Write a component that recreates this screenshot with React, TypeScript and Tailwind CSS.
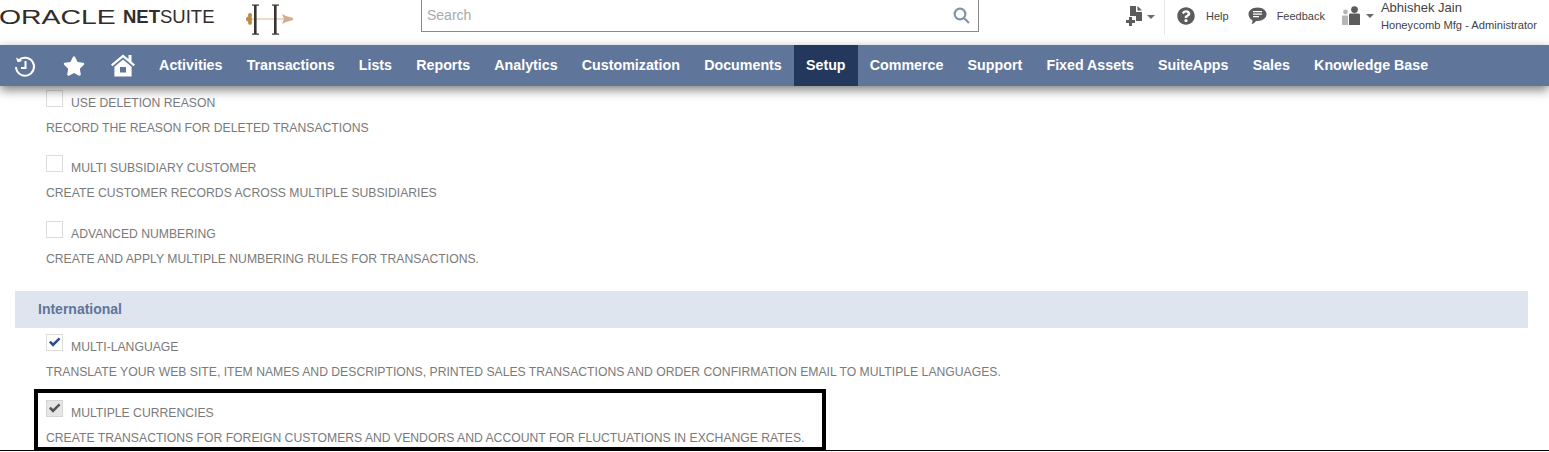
import { FaQuestionCircle, FaStar } from "react-icons/fa"

const navItems = [
  "Activities",
  "Transactions",
  "Lists",
  "Reports",
  "Analytics",
  "Customization",
  "Documents",
  "Setup",
  "Commerce",
  "Support",
  "Fixed Assets",
  "SuiteApps",
  "Sales",
  "Knowledge Base",
]

function Caret() {
  return <span className="block h-0 w-0 border-x-[4px] border-t-[4px] border-x-transparent border-t-[#6b6b6b]" />
}

function HistoryIcon() {
  return (
    <svg width="24" height="24" viewBox="0 0 24 24" fill="none" stroke="white" strokeWidth="2">
      <path d="M5.5 6.5 A9 9 0 1 1 3 13" />
      <path d="M3 3.5 L4.6 8.2 L9.4 7" fill="white" stroke="none" />
      <path d="M12.5 7 V14 H8" />
    </svg>
  )
}

function HomeIcon() {
  return (
    <svg width="24" height="23" viewBox="0 0 24 23" fill="white">
      <path d="M12 0.5 L17.5 5 V1 H20.5 V7.6 L24 10.6 L22.6 12.3 L12 3.4 L1.4 12.3 L0 10.6 Z" />
      <path d="M12 5.6 L20.6 12.8 V22.5 H3.4 V12.8 Z M9 13 V18.5 H15 V13 Z" fillRule="evenodd" />
    </svg>
  )
}

function NewRecordIcon() {
  return (
    <svg width="19" height="21" viewBox="0 0 19 21" fill="#5c5c5c">
      <path d="M4 0 H10 V6 H16 V15 H10 V10 H4 Z" />
      <path d="M11.5 0 L16 4.6 H11.5 Z" />
      <path d="M3 11 H6 V14 H9 V17 H6 V20 H3 V17 H0 V14 H3 Z" />
    </svg>
  )
}

function FeedbackIcon() {
  return (
    <svg width="19" height="18" viewBox="0 0 19 18">
      <path d="M9.5 0.5 C14.7 0.5 18.5 3.4 18.5 7.2 C18.5 11 14.7 13.9 9.5 13.9 L8 13.9 C7 15.3 5.4 16.6 3.6 17 C4.3 15.9 4.6 14.6 4.5 13.2 C2 12 0.5 9.8 0.5 7.2 C0.5 3.4 4.3 0.5 9.5 0.5 Z" fill="#5c5c5c" />
      <path d="M5 4.7 H14 M5 7.2 H14 M5 9.7 H11" stroke="white" strokeWidth="1.2" />
    </svg>
  )
}

function RolesIcon() {
  return (
    <svg width="21" height="20" viewBox="0 0 21 20">
      <circle cx="3.5" cy="6" r="2.4" fill="#b5b5b5" />
      <path d="M0 9.5 H6 V19 H0 Z" fill="#b5b5b5" />
      <circle cx="12.5" cy="3.6" r="3.4" fill="#5c5c5c" />
      <path d="M7 9 Q7 7.6 8.6 7.6 H16.4 Q18 7.6 18 9 V19 H7 Z" fill="#5c5c5c" />
    </svg>
  )
}

function LogoMark() {
  return (
    <svg width="48" height="32" viewBox="0 0 48 32">
      <path d="M5 16 H40" stroke="#dcb594" strokeWidth="1.2" />
      <ellipse cx="4" cy="12.5" rx="2" ry="2.4" fill="#c08a45" />
      <ellipse cx="4" cy="19.5" rx="2" ry="2.4" fill="#c08a45" />
      <ellipse cx="3" cy="16" rx="3" ry="2.6" fill="#c08a45" />
      <rect x="8" y="2" width="2.6" height="29" fill="#3a3330" />
      <rect x="28" y="2" width="2.6" height="29" fill="#3a3330" />
      <rect x="6" y="1.5" width="7" height="1.2" fill="#3a3330" />
      <rect x="6" y="30.5" width="7" height="1.2" fill="#3a3330" />
      <rect x="26" y="1.5" width="7" height="1.2" fill="#3a3330" />
      <rect x="26" y="30.5" width="7" height="1.2" fill="#3a3330" />
      <path d="M36 11 L40 13 L47 15 L47 17 L40 19 L36 21 L38 16 Z" fill="#d3ab90" />
    </svg>
  )
}

function Checkbox({ state }: { state: "off" | "on" | "locked" }) {
  const box =
    state === "locked" ? "border-[#d4d4d4] bg-[#e6e6e6]" : "border-[#dcdcdc] bg-white"
  const tick = state === "locked" ? "#555555" : "#2f4a8f"
  return (
    <span className={`flex h-[17px] w-[17px] shrink-0 items-center justify-center border ${box}`}>
      {state !== "off" && (
        <svg width="13" height="11" viewBox="0 0 13 11">
          <path d="M1 5.5 L2.8 3.8 L5 6 L10.8 0.6 L12.4 2.2 L5 9.8 Z" fill={tick} />
        </svg>
      )}
    </span>
  )
}

function Feature({
  label,
  text,
  state = "off",
  className = "",
}: {
  label: string
  text: string
  state?: "off" | "on" | "locked"
  className?: string
}) {
  return (
    <div className={`pl-[46px] ${className}`}>
      <div className="flex h-[17px] gap-2">
        <Checkbox state={state} />
        <span className="mt-[6px] text-[12.2px] leading-[14px] text-[#7a7a7a]">{label}</span>
      </div>
      <p className="mt-[14px] text-[12.2px] leading-[14px] text-[#7a7a7a]">{text}</p>
    </div>
  )
}

export default function App() {
  return (
    <div className="relative h-[452px] w-[1549px] overflow-hidden bg-white font-['Liberation_Sans',Arial,sans-serif]">
      <header className="flex h-[45px] items-start">
        <div className="mt-[6px] flex w-[421px] items-start">
          <span className="-ml-[1px] inline-block w-[124px] origin-left scale-x-[1.42] text-[20px] leading-[22px] font-medium text-[#312d2a]">
            ORACLE
          </span>
          <span className="w-[123px] text-[18.5px] leading-[22px] text-[#312d2a]">
            <b>NET</b>SUITE
          </span>
          <span className="-mt-[3px]">
            <LogoMark />
          </span>
        </div>
        <div className="flex h-[32px] w-[558px] items-center justify-between border border-t-0 border-[#8a8a8a] pr-2 pl-[5px]">
          <span className="text-[14px] text-[#a9a9a9]">Search</span>
          <svg width="17" height="17" viewBox="0 0 17 17" fill="none" stroke="#7f93ad" strokeWidth="2.2">
            <circle cx="7" cy="7" r="5.4" />
            <path d="M11 11 L16 16" />
          </svg>
        </div>
        <div className="ml-[147px] flex h-[35px] items-center gap-[2px] border-r border-[#e6e6e6] pr-[9px] pb-[2px]">
          <NewRecordIcon />
          <Caret />
        </div>
        <div className="mt-[6px] ml-[12px] flex h-[20px] items-center">
          <FaQuestionCircle className="text-[18px] text-[#5c5c5c]" />
          <span className="ml-[11px] text-[11px] text-[#444444]">Help</span>
          <span className="ml-[19px] flex">
            <FeedbackIcon />
          </span>
          <span className="ml-[10px] text-[11px] text-[#444444]">Feedback</span>
          <span className="ml-[17px] flex">
            <RolesIcon />
          </span>
          <span className="ml-[3px] flex">
            <Caret />
          </span>
        </div>
        <div className="ml-[7px] flex flex-col">
          <span className="text-[13px] leading-[16px] text-[#444444]">Abhishek Jain</span>
          <span className="mt-[2px] text-[11.15px] leading-[14px] text-[#444444]">Honeycomb Mfg - Administrator</span>
        </div>
      </header>

      <nav className="relative z-10 flex h-[41px] items-stretch bg-[#5f7599] pl-[13px] shadow-[0_4px_10px_rgba(0,0,0,0.5)]">
        <div className="flex w-[134px] items-center">
          <HistoryIcon />
          <span className="ml-[26px] flex">
            <FaStar className="text-[22px] text-white" />
          </span>
          <span className="ml-[26px] flex">
            <HomeIcon />
          </span>
        </div>
        {navItems.map((item) =>
          <span
            key={item}
            className={`flex items-center px-[12.1px] text-[14.25px] font-bold text-white ${
              item === "Setup" ? "bg-[#23385c]" : ""
            }`}
          >
            {item}
          </span>
        )}
      </nav>

      <main className="pt-[4px]">
        <Feature label="USE DELETION REASON" text="RECORD THE REASON FOR DELETED TRANSACTIONS" />
        <Feature
          className="mt-[20px]"
          label="MULTI SUBSIDIARY CUSTOMER"
          text="CREATE CUSTOMER RECORDS ACROSS MULTIPLE SUBSIDIARIES"
        />
        <Feature
          className="mt-[21px]"
          label="ADVANCED NUMBERING"
          text="CREATE AND APPLY MULTIPLE NUMBERING RULES FOR TRANSACTIONS."
        />
        <div className="mt-[25px] ml-[15px] flex h-[37px] w-[1513px] items-center bg-[#dfe5ef] pl-[23px] text-[14px] font-bold text-[#5f7599]">
          International
        </div>
        <Feature
          className="mt-[6px]"
          state="on"
          label="MULTI-LANGUAGE"
          text="TRANSLATE YOUR WEB SITE, ITEM NAMES AND DESCRIPTIONS, PRINTED SALES TRANSACTIONS AND ORDER CONFIRMATION EMAIL TO MULTIPLE LANGUAGES."
        />
        <Feature
          className="mt-[21px]"
          state="locked"
          label="MULTIPLE CURRENCIES"
          text="CREATE TRANSACTIONS FOR FOREIGN CUSTOMERS AND VENDORS AND ACCOUNT FOR FLUCTUATIONS IN EXCHANGE RATES."
        />
      </main>

      {/* annotation drawn over the page */}
      <div className="absolute top-[389px] left-[34px] h-[62px] w-[792px] border-4 border-black" />
      <div className="absolute top-[450px] left-0 h-px w-full bg-black" />
    </div>
  )
}
